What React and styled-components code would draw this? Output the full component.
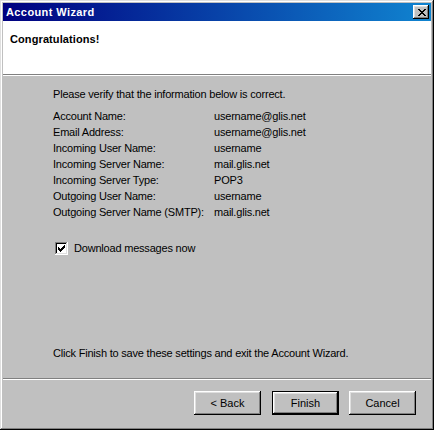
import React from "react";
import styled, { createGlobalStyle } from "styled-components";

const GlobalStyle = createGlobalStyle`
  html, body {
    margin: 0;
    padding: 0;
    background: #c0c0c0;
  }
  body {
    font-family: "Liberation Sans", Arial, sans-serif;
    font-size: 11px;
    color: #000;
  }
`;

const bevelOut = `
  inset -1px -1px #000,
  inset 1px 1px #fff,
  inset -2px -2px #808080,
  inset 2px 2px #dfdfdf
`;

const Window = styled.div`
  width: 434px;
  height: 430px;
  box-sizing: border-box;
  padding: 3px;
  background: #c0c0c0;
  box-shadow: inset -1px -1px #000, inset 1px 1px #dfdfdf,
    inset -2px -2px #808080, inset 2px 2px #fff;
  display: flex;
  flex-direction: column;
`;

const TitleBar = styled.div`
  height: 18px;
  flex: none;
  display: flex;
  align-items: center;
  justify-content: space-between;
  padding: 0 2px 0 3px;
  background: linear-gradient(90deg, #000080, #1084d0);
  color: #fff;
  font-weight: bold;
  font-size: 11px;
  letter-spacing: 0.4px;
`;

const CloseButton = styled.div`
  width: 16px;
  height: 14px;
  background: #c0c0c0;
  box-shadow: ${bevelOut};
  display: flex;
  align-items: center;
  justify-content: center;
  padding-left: 1px;
  box-sizing: border-box;
`;

const Header = styled.div`
  height: 53px;
  flex: none;
  box-sizing: border-box;
  background: #fff;
  padding: 10px 7px 0;
  font-weight: bold;
  line-height: 16px;
  letter-spacing: 0.1px;
`;

const Separator = styled.div`
  height: 0;
  flex: none;
  border-top: 1px solid #808080;
  border-bottom: 1px solid #fff;
`;

const Body = styled.div`
  flex: 1;
  display: flex;
  flex-direction: column;
  padding: 10px 0 17px 50px;
  line-height: 16px;
  letter-spacing: -0.2px;
`;

const Line = styled.div`
  height: 16px;
`;

const InfoList = styled.div`
  margin-top: 6px;
  display: grid;
  grid-template-columns: 161px auto;
  grid-auto-rows: 16px;
`;

const CheckRow = styled.label`
  margin-top: 20px;
  height: 16px;
  display: flex;
  align-items: center;
  gap: 6px;
  padding-left: 2px;
`;

const CheckBox = styled.span`
  width: 13px;
  height: 13px;
  box-sizing: border-box;
  background: #fff;
  box-shadow: inset -1px -1px #fff, inset 1px 1px #808080,
    inset -2px -2px #dfdfdf, inset 2px 2px #000;
  display: flex;
  align-items: center;
  justify-content: center;
`;

const Note = styled.div`
  margin-top: auto;
  height: 16px;
`;

const Footer = styled.div`
  height: 47px;
  flex: none;
  box-sizing: border-box;
  padding: 11px 15px 0 0;
  display: flex;
  justify-content: flex-end;
  gap: 10px;
`;

const Button = styled.button`
  width: 67px;
  height: 24px;
  margin: 0;
  margin-right: ${(p) => p.$extra || 0}px;
  padding: 0;
  font-family: "Liberation Sans", Arial, sans-serif;
  font-size: 11px;
  color: #000;
  background: #c0c0c0;
  box-sizing: border-box;
  border: ${(p) => (p.$default ? "1px solid #000" : "none")};
  box-shadow: ${bevelOut};
  cursor: pointer;
`;

const rows = [
  ["Account Name:", "username@glis.net"],
  ["Email Address:", "username@glis.net"],
  ["Incoming User Name:", "username"],
  ["Incoming Server Name:", "mail.glis.net"],
  ["Incoming Server Type:", "POP3"],
  ["Outgoing User Name:", "username"],
  ["Outgoing Server Name (SMTP):", "mail.glis.net"],
];

const CloseGlyph = () => (
  <svg width="8" height="7" viewBox="0 0 8 7" shapeRendering="crispEdges">
    <path
      d="M0 0h2v1h-2zM6 0h2v1h-2zM1 1h2v1h-2zM5 1h2v1h-2zM2 2h4v1h-4zM3 3h2v1h-2zM2 4h4v1h-4zM1 5h2v1h-2zM5 5h2v1h-2zM0 6h2v1h-2zM6 6h2v1h-2z"
      fill="#000"
    />
  </svg>
);

const Tick = () => (
  <svg width="7" height="7" viewBox="0 0 7 7" shapeRendering="crispEdges">
    <path
      d="M6 0h1v3h-1zM5 1h1v3h-1zM4 2h1v3h-1zM3 3h1v3h-1zM2 4h1v3h-1zM1 3h1v3h-1zM0 2h1v3h-1z"
      fill="#000"
    />
  </svg>
);

export default function App() {
  return (
    <>
      <GlobalStyle />
      <Window>
        <TitleBar>
          <span>Account Wizard</span>
          <CloseButton>
            <CloseGlyph />
          </CloseButton>
        </TitleBar>
        <Header>Congratulations!</Header>
        <Separator />
        <Body>
          <Line>Please verify that the information below is correct.</Line>
          <InfoList>
            {rows.map(([label, value]) => (
              <React.Fragment key={label}>
                <span>{label}</span>
                <span>{value}</span>
              </React.Fragment>
            ))}
          </InfoList>
          <CheckRow>
            <CheckBox>
              <Tick />
            </CheckBox>
            Download messages now
          </CheckRow>
          <Note>Click Finish to save these settings and exit the Account Wizard.</Note>
        </Body>
        <Separator />
        <Footer>
          <Button $extra={1}>&lt; Back</Button>
          <Button $default>Finish</Button>
          <Button>Cancel</Button>
        </Footer>
      </Window>
    </>
  );
}
